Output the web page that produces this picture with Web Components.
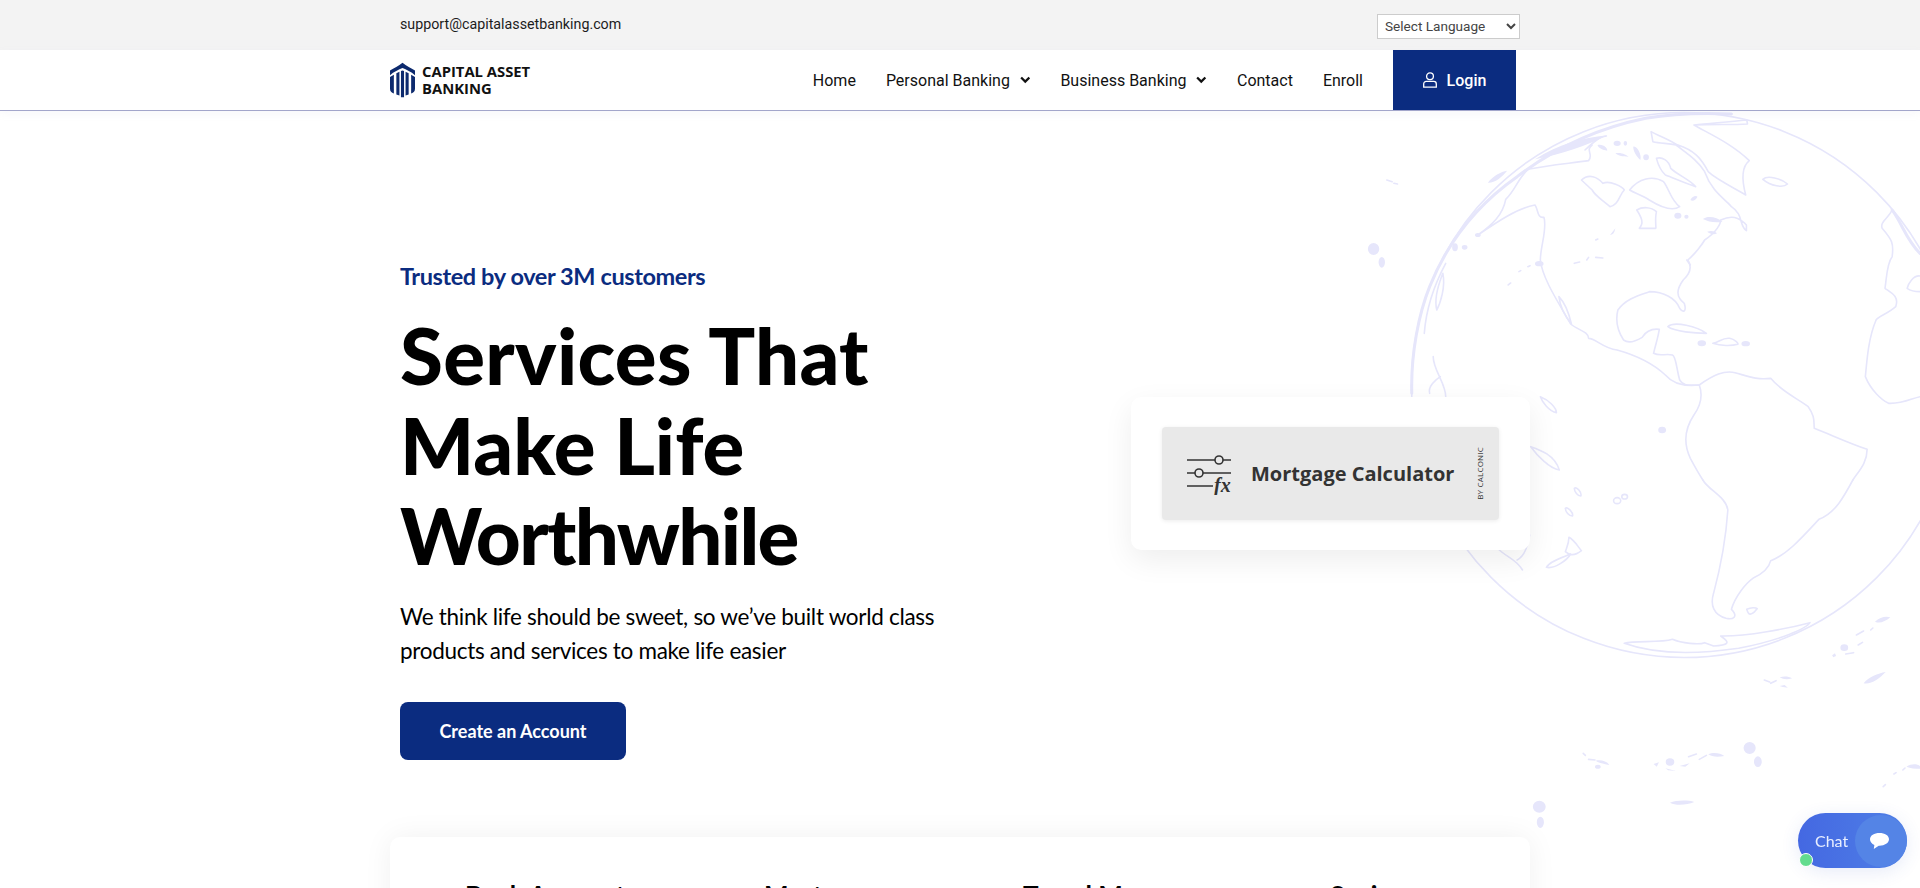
<!DOCTYPE html>
<html lang="en">
<head>
<meta charset="utf-8">
<title>Capital Asset Banking</title>
<style>
  html, body { margin: 0; height: 888px; overflow: hidden; background: #fff; }
</style>
</head>
<body>
<site-page>
  <top-bar slot="top">support@capitalassetbanking.com</top-bar>
  <main-nav slot="nav">
    <nav-link>Home</nav-link>
    <nav-link caret>Personal Banking</nav-link>
    <nav-link caret>Business Banking</nav-link>
    <nav-link>Contact</nav-link>
    <nav-link>Enroll</nav-link>
  </main-nav>
  <globe-map slot="map"></globe-map>
  <hero-copy slot="hero"></hero-copy>
  <calc-card slot="hero"></calc-card>
  <service-strip slot="strip">
    <span>Bank Accounts</span><span>Mortgages</span><span>Travel Money</span><span>Savings</span>
  </service-strip>
  <chat-bubble slot="chat"></chat-bubble>
</site-page>

<script>
class SitePage extends HTMLElement {
    constructor() {
        super();
        this.attachShadow({ mode: 'open' });
        this.shadowRoot.innerHTML = `
        <style>
            :host { display: block; position: relative; height: 888px; overflow: hidden; background: #fff; }
            .wrap { position: relative; width: 1140px; margin: 0 auto; }
            .hero { display: flex; justify-content: space-between; align-items: flex-start; padding-left: 10px; height: 726px; }
        </style>
        <slot name="top"></slot>
        <slot name="nav"></slot>
        <slot name="map"></slot>
        <div class="wrap"><div class="hero"><slot name="hero"></slot></div></div>
        <div class="wrap"><slot name="strip"></slot></div>
        <slot name="chat"></slot>
      `;
    }
}

class TopBar extends HTMLElement {
    constructor() {
        super();
        this.attachShadow({ mode: 'open' });
        this.shadowRoot.innerHTML = `
        <style>
            :host { display: block; height: 50px; background: #f3f3f3; font: 400 14.25px Roboto, sans-serif; color: #1c1c1c; }
            .in { width: 1140px; height: 50px; margin: 0 auto; padding-left: 10px; box-sizing: border-box; display: flex; justify-content: space-between; }
            .mail { padding-top: 15px; line-height: 18px; }
            select { width: 143px; height: 25px; margin: 14px 10px 0 0; font: 400 13.6px Roboto, sans-serif; color: #444; background: #fff; border: 1px solid #ccc; padding: 0 3px 2px; }
        </style>
        <div class="in">
          <span class="mail"><slot></slot></span>
          <select><option>Select Language</option></select>
        </div>
      `;
    }
}

class MainNav extends HTMLElement {
    constructor() {
        super();
        this.attachShadow({ mode: 'open' });
        this.shadowRoot.innerHTML = `
        <style>
            :host { display: block; position: relative; z-index: 2; height: 60px; background: #fff; border-bottom: 1px solid #a3a6cb; box-shadow: 0 3px 8px rgba(165,168,204,.08); }
            .in { width: 1140px; height: 60px; margin: 0 auto; display: flex; align-items: center; }
            .logo { display: flex; align-items: center; gap: 7px; margin-top: -1px; }
            .name { font: 700 14.8px/17px "Open Sans", sans-serif; color: #111; }
            .links { display: flex; gap: 30px; align-items: center; margin-left: auto; }
            .login { display: flex; align-items: center; justify-content: center; gap: 10px; width: 123px; height: 60px; margin-left: 30px; margin-right: 14px; background: #0b2c80; color: #fff; font: 500 16px Roboto, sans-serif; }
        </style>
        <div class="in">
          <div class="logo">
            <svg width="25" height="36" viewBox="0 0 26 36">
              <path fill="#0d2a6e" d="M13 0C17 3 22 6 26 8V13C22 9.500 17 7 13 5.500 9 7 4 9.500 0 13V8C4 6 9 3 13 0Z"/>
              <path fill="#0d2a6e" d="M0 15 4 12.500V32C1.500 31 0 29.500 0 27Z"/>
              <path fill="#0d2a6e" d="M6.600 11 9.800 9.400V34L6.600 33Z"/>
              <path fill="#0d2a6e" d="M11.400 8.600 13 8 14.600 8.600V36H11.400Z"/>
              <path fill="#0d2a6e" d="M16.200 9.400 19.400 11V33L16.200 34Z"/>
              <path fill="#0d2a6e" d="M22 12.500 26 15V27C26 29.500 24.500 31 22 32Z"/>
            </svg>
            <div class="name">CAPITAL ASSET<br>BANKING</div>
          </div>
          <div class="links"><slot></slot></div>
          <div class="login">
            <svg width="14" height="16" viewBox="0 0 14 16" fill="none" stroke="#fff" stroke-width="1.3">
              <circle cx="7" cy="4.3" r="3.4"/>
              <path d="M3.2 9.4h7.6a2.5 2.5 0 0 1 2.5 2.5v3.2H.7v-3.2a2.5 2.5 0 0 1 2.5-2.5Z"/>
            </svg>
            <span>Login</span>
          </div>
        </div>
      `;
    }
}

class NavLink extends HTMLElement {
    constructor() {
        super();
        this.attachShadow({ mode: 'open' });
        const caret = this.hasAttribute('caret')
            ? `<svg width="10.500" height="8" viewBox="0 0 11 8"><path d="M1.2 1.400 5.500 5.700l4.300-4.300" fill="none" stroke="#111" stroke-width="2.400"/></svg>`
            : '';
        this.shadowRoot.innerHTML = `
        <style>
            :host { display: inline-flex; align-items: center; gap: 10px; font: 400 16px Roboto, sans-serif; color: #111; }
        </style>
        <slot></slot>${caret}
      `;
    }
}

class GlobeMap extends HTMLElement {
    constructor() {
        super();
        this.attachShadow({ mode: 'open' });
        this.shadowRoot.innerHTML = `
        <style>
            :host { display: block; position: absolute; left: 0; top: 0; width: 1920px; height: 888px; pointer-events: none; }
            svg { display: block; }
            .line { fill: none; stroke: #e6e6fb; stroke-width: 1.6; vector-effect: non-scaling-stroke; stroke-linejoin: round; stroke-linecap: round; }
            .thick { stroke-width: 3; }
            .dot { fill: #e6e6fb; stroke: none; }
        </style>
        <svg width="1920" height="888" viewBox="0 0 1920 888">
          <circle class="line" cx="1684" cy="385" r="272.5"/>
          <g transform="translate(1360 100) scale(.35714 .33333)">
            <!-- left rim -->
            <path class="line thick" d="M145 880C142 760 165 640 195 560C240 440 320 320 440 230C520 165 640 90 800 55C880 40 960 38 1040 42"/>
            <path class="line" d="M180 700C185 630 205 560 240 490M205 770C205 810 240 850 240 890M195 880C190 860 210 840 225 830M215 630C205 590 225 540 232 520C240 560 225 610 215 630Z"/>
            <path class="dot" d="M358 248C372 228 395 215 412 212C398 232 375 250 358 248ZM490 178C560 130 620 115 692 106C640 135 560 165 490 178Z"/>
            <!-- north america -->
            <path class="line" d="M330 405C370 375 400 345 408 298C435 270 440 240 470 208C530 195 590 190 640 182C655 165 630 150 650 135M330 405C385 365 440 325 490 315C500 330 495 355 515 352C525 385 505 440 505 480C510 530 545 590 590 672C610 690 640 695 640 715C660 715 680 745 720 750C770 765 820 790 855 825C875 850 910 860 950 855C960 885 955 915 935 945C910 985 905 1030 925 1075C945 1115 960 1140 960 1140"/>
            <path class="line" d="M950 855C990 825 1020 810 1050 818C1090 830 1110 840 1150 835C1180 875 1225 895 1255 920C1275 950 1270 965 1272 985C1320 1005 1370 1030 1420 1048C1420 1090 1395 1115 1380 1140"/>
            <path class="line" d="M950 855C925 855 905 860 895 840C885 800 885 770 875 765C855 760 840 770 822 760C830 725 835 710 838 688C815 685 800 695 790 712C770 725 750 730 738 720C720 690 715 660 722 630C745 595 785 585 810 575C850 575 885 595 895 625C905 640 915 635 908 610C885 590 885 570 905 540C925 520 930 500 918 480C940 460 960 430 965 420C1000 395 1010 370 1010 360C1040 345 1060 350 1082 375V392C1060 375 1075 345 1040 320C1020 295 985 275 965 215C945 180 915 160 885 135C860 130 840 130 820 125L815 95C840 110 870 120 895 140"/>
            <path class="line" d="M557 590C575 610 585 640 592 672C575 650 560 620 557 590Z"/>
            <!-- greenland -->
            <path class="line" d="M935 75C990 72 1040 75 1085 72L1083 60C1030 66 980 70 935 75C975 100 1040 130 1090 182C1075 195 1065 225 1080 285C1050 265 1000 240 975 215C955 175 935 150 890 135"/>
            <!-- arctic islands -->
            <path class="line" d="M620 240C640 220 665 230 680 250C700 240 735 260 740 270C725 285 725 315 700 320C680 300 660 290 650 270C640 260 630 250 620 240Z"/>
            <path class="line" d="M755 270C780 235 820 225 850 245C865 265 870 300 895 320C875 335 840 320 810 300C790 285 770 280 755 270Z"/>
            <path class="line" d="M830 175C845 170 865 180 870 205C890 225 925 240 940 260C910 250 880 235 855 225C840 210 835 195 830 175Z"/>
            <path class="line" d="M775 330C790 320 815 320 830 335C825 360 830 385 828 385H782C795 370 790 355 775 330Z"/>
            <path class="line" d="M630 150C650 130 670 110 690 108"/>
            <path class="dot" d="M665 135C680 130 695 145 692 152C680 150 668 145 665 135ZM710 130a10 8 0 1 0 20 0a10 8 0 1 0-20 0ZM738 130a5 7 0 1 0 10 0a5 7 0 1 0-10 0ZM765 140C775 135 790 165 785 180C775 170 765 155 765 140ZM793 172a8 9 0 1 0 16 0a8 9 0 1 0-16 0ZM715 160C730 155 748 165 752 170C735 170 725 168 715 160ZM880 347a10 9 0 1 0 20 0a10 9 0 1 0-20 0ZM908 350a6 6 0 1 0 12 0a6 6 0 1 0-12 0ZM960 357C975 345 1000 352 1015 365C995 370 975 365 960 357ZM972 395C985 390 995 395 1000 400C990 405 980 402 972 395ZM925 300C930 290 940 285 945 290C940 300 932 305 925 300Z"/>
            <path class="line" d="M1128 238C1140 225 1180 235 1197 252C1185 265 1150 258 1128 238Z"/>
            <path class="line" d="M915 480L925 495M862 680C880 662 945 680 970 700C940 700 880 695 862 680ZM988 730C1005 728 1015 712 1035 715C1050 718 1060 730 1058 733C1040 738 1010 738 988 730Z"/>
            <path class="dot" d="M945 730a12 9 0 1 0 24 0a12 9 0 1 0-24 0ZM1068 731a12 8 0 1 0 24 0a12 8 0 1 0-24 0ZM835 990a11 10 0 1 0 22 0a11 10 0 1 0-22 0Z"/>
            <!-- pacific dots -->
            <path class="dot" d="M22 447a16 18 0 1 0 32 0a16 18 0 1 0-32 0ZM52 487a9 16 0 1 0 18 0a9 16 0 1 0-18 0ZM258 442a8 12 0 1 0 16 0a8 12 0 1 0-16 0ZM285 442a8 7 0 1 0 16 0a8 7 0 1 0-16 0ZM490 491a12 8 0 1 0 24 0a12 8 0 1 0-24 0ZM322 405a8 6 0 1 0 16 0a8 6 0 1 0-16 0ZM700 405L715 385C712 400 708 405 700 405Z"/>
            <path class="line" d="M470 500l6-3M445 515l5-3M415 555l7-6M75 240l15 5M95 250l10 2M600 490l15-4M635 480l5-8M660 472l20 2M660 420l6-3"/>
            <!-- europe and africa edge -->
            <path class="line" d="M1490 330C1480 355 1455 365 1462 385C1490 420 1495 430 1490 470C1475 490 1475 530 1470 565C1490 580 1510 590 1500 620C1480 640 1450 650 1445 660C1425 710 1420 770 1415 830C1430 870 1460 900 1480 910C1520 912 1545 895 1568 890"/>
            <path class="line thick" d="M1490 330C1520 375 1530 420 1568 460"/>
            <path class="line" d="M1568 528C1550 525 1535 550 1532 565C1545 575 1560 575 1568 575"/>
            <path class="line" d="M505 890C530 900 550 925 550 938C530 935 510 905 505 890ZM478 1040C505 1050 545 1065 558 1110C530 1105 495 1065 478 1040Z"/>
          </g>
          <g transform="translate(1360 480) scale(.35714 .33333)">
            <path class="line" d="M960 0C975 30 1025 50 1030 90C1025 170 1010 260 990 340C980 375 990 405 1025 415C1045 420 1060 410 1040 388C1050 350 1080 310 1100 295C1130 280 1145 265 1150 242C1195 225 1240 170 1285 118C1330 100 1355 50 1380 0"/>
            <path class="line" d="M740 490C770 480 840 490 875 478C900 490 950 495 965 488L990 498C1030 495 1040 490 1010 468C1080 470 1200 445 1260 428C1250 445 1180 480 1060 505C950 522 830 525 740 490Z"/>
            <path class="line" d="M390 210C410 230 440 240 455 270M440 240C465 225 470 190 475 165"/>
            <path class="line" d="M600 25C608 18 622 40 618 48C610 48 600 35 600 25ZM575 85C582 78 598 100 595 108C585 108 575 95 575 85ZM710 62a10 9 0 1 0 20 0a10 9 0 1 0-20 0ZM733 50a8 7 0 1 0 16 0a8 7 0 1 0-16 0ZM585 172C600 180 610 200 620 212C605 225 590 230 575 215C580 200 585 190 585 172ZM522 262C530 245 560 235 590 222C580 240 545 268 522 262ZM1083 388C1095 382 1108 382 1112 386C1105 395 1100 405 1090 402C1085 398 1085 393 1083 388Z"/>
            <path class="dot" d="M1442 425C1455 410 1475 408 1485 412C1470 425 1455 432 1442 425ZM1345 503a11 10 0 1 0 22 0a11 10 0 1 0-22 0ZM1322 526l8-6 3 8-8 4ZM1410 610C1425 590 1450 580 1472 576C1455 595 1430 615 1410 610ZM1175 592C1190 588 1200 590 1210 595C1195 600 1185 598 1175 592ZM1175 618l14-3 9 8-14-2ZM1074 804a17 18 0 1 0 34 0a17 18 0 1 0-34 0ZM1103 845a11 16 0 1 0 22 0a11 16 0 1 0-22 0ZM975 823C990 815 1010 820 1020 828C1000 832 985 830 975 823ZM856 846a12 11 0 1 0 24 0a12 11 0 1 0-24 0ZM822 852l15-5-6 13ZM855 865l30 8-22-2ZM895 858l28-8-12 10ZM660 842C680 838 695 848 698 855C685 852 670 850 660 842ZM658 860a8 6 0 1 0 16 0a8 6 0 1 0-16 0ZM484 980a18 18 0 1 0 36 0a18 18 0 1 0-36 0ZM495 1027a10 17 0 1 0 20 0a10 17 0 1 0-20 0ZM868 968C885 960 920 960 936 966C915 975 885 978 868 968ZM1530 860C1545 850 1560 852 1568 858V866C1555 866 1540 865 1530 860Z"/>
            <path class="line" d="M1390 465l20-12M1395 495l12-8M1360 522l22-4M1430 450l6-6M1132 600l15 6M1150 610l15-8M625 820l6 6M640 838l18 2M920 830l22-8M950 838l20-12M1465 920l6-6M1495 882l6-4M1520 870l6-6"/>
          </g>
        </svg>
      `;
    }
}

class HeroCopy extends HTMLElement {
    constructor() {
        super();
        this.attachShadow({ mode: 'open' });
        this.shadowRoot.innerHTML = `
        <style>
            :host { display: block; font-family: Lato, sans-serif; color: #000; position: relative; }
            .kicker { margin: 0; padding-top: 150px; font-size: 23.5px; line-height: 30px; letter-spacing: -.4px; font-weight: 700; color: #0b2c80; }
            h1 { margin: 19px 0 0; font-size: 78px; line-height: 90px; font-weight: 900; }
            h1 span { display: block; }
            .l1 { letter-spacing: .3px; }
            .l3 { letter-spacing: -1.7px; }
            p { margin: 20px 0 0; font-size: 22.5px; line-height: 34px; letter-spacing: -.3px; font-weight: 400; }
            a { display: flex; align-items: center; justify-content: center; width: 226px; height: 58px; margin-top: 34px; border-radius: 8px; background: #0b2c80; color: #fff; font-size: 18px; font-weight: 700; }
        </style>
        <div class="kicker">Trusted by over 3M customers</div>
        <h1><span class="l1">Services That</span><span>Make Life</span><span class="l3">Worthwhile</span></h1>
        <p>We think life should be sweet, so we’ve built world class<br>products and services to make life easier</p>
        <a>Create an Account</a>
      `;
    }
}

class CalcCard extends HTMLElement {
    constructor() {
        super();
        this.attachShadow({ mode: 'open' });
        this.shadowRoot.innerHTML = `
        <style>
            :host { display: block; box-sizing: border-box; width: 399px; height: 153px; margin-top: 286px; padding: 30px 31px; background: #fff; border-radius: 10px; box-shadow: 0 10px 30px rgba(0,0,0,.07); position: relative; }
            .btn { box-sizing: border-box; height: 93px; display: flex; align-items: center; padding-left: 25px; background: #e9e9e9; border-radius: 4px; box-shadow: 0 1px 4px rgba(0,0,0,.08); font-family: "Open Sans", sans-serif; color: #333; }
            svg { flex: none; }
            .t { margin-left: 19px; font-size: 20px; font-weight: 700; white-space: nowrap; }
            .by { margin-left: 22px; writing-mode: vertical-rl; transform: rotate(180deg); font-size: 8px; line-height: 8px; letter-spacing: .2px; white-space: nowrap; }
        </style>
        <div class="btn">
          <svg width="45" height="42" viewBox="0 0 45 42" fill="none" stroke="#333" stroke-width="1.6">
            <path d="M0 7h28M36 7h8M0 20h8M16 20h28M0 33h26"/>
            <circle cx="32" cy="7" r="4"/>
            <circle cx="12" cy="20" r="4"/>
            <text x="27" y="39" font-family="Liberation Serif, serif" font-style="italic" font-weight="700" font-size="20" fill="#333" stroke="none">fx</text>
          </svg>
          <span class="t">Mortgage Calculator</span>
          <span class="by">BY CALCONIC</span>
        </div>
      `;
    }
}

class ServiceStrip extends HTMLElement {
    constructor() {
        super();
        this.attachShadow({ mode: 'open' });
        this.shadowRoot.innerHTML = `
        <style>
            :host { display: block; position: relative; height: 200px; background: #fff; border-radius: 10px; box-shadow: 0 0 30px rgba(0,0,0,.06); font: 700 26px/32px Lato, sans-serif; color: #000; }
            .row { display: grid; grid-template-columns: 299px 259px 307px auto; padding: 42px 0 0 75px; }
        </style>
        <div class="row"><slot></slot></div>
      `;
    }
}

class ChatBubble extends HTMLElement {
    constructor() {
        super();
        this.attachShadow({ mode: 'open' });
        this.shadowRoot.innerHTML = `
        <style>
            :host { display: flex; align-items: center; position: fixed; right: 13px; bottom: 20px; z-index: 5; box-sizing: border-box; width: 109px; height: 55px; padding-left: 17px; padding-bottom: 1px; border-radius: 28px; background: linear-gradient(90deg, #4468e2, #4f7fe6); box-shadow: 0 4px 18px rgba(60,90,200,.12); font: 400 16px Lato, sans-serif; color: #e9efff; }
            .i { position: absolute; right: 0; top: 2px; width: 52px; height: 52px; border-radius: 50%; background: #5484e6; display: flex; align-items: center; justify-content: center; padding-right: 3px; box-sizing: border-box; }
            .on { position: absolute; left: 1px; bottom: 1px; width: 12px; height: 12px; border-radius: 50%; background: #62dc8e; border: 1.500px solid #fff; }
        </style>
        <span>Chat</span>
        <div class="i">
          <svg width="21" height="19" viewBox="0 0 21 20"><path fill="#fff" d="M10.500 1C16 1 20.500 3.400 20.500 7.700c0 4-4.500 6.700-10 6.700l-.8 0L4.500 18l.6-4.400C2.300 12.500.500 10.300.500 7.700.500 3.400 5 1 10.500 1Z"/></svg>
        </div>
        <div class="on"></div>
      `;
    }
}

customElements.define('site-page', SitePage);
customElements.define('top-bar', TopBar);
customElements.define('main-nav', MainNav);
customElements.define('nav-link', NavLink);
customElements.define('globe-map', GlobeMap);
customElements.define('hero-copy', HeroCopy);
customElements.define('calc-card', CalcCard);
customElements.define('service-strip', ServiceStrip);
customElements.define('chat-bubble', ChatBubble);
</script>
</body>
</html>
